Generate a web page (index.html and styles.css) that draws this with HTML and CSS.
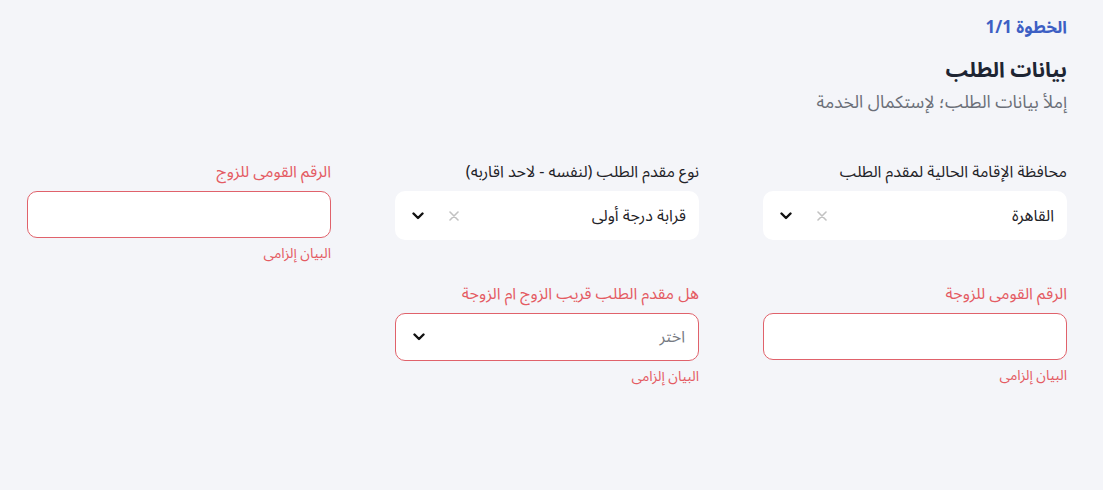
FILE: index.html
```html
<!DOCTYPE html>
<html lang="ar" dir="rtl">
<head>
<meta charset="utf-8">
<link rel="stylesheet" href="styles.css">
</head>
<body>
<main class="page">
  <header class="head">
    <div class="step">الخطوة 1/1</div>
    <h1 class="title">بيانات الطلب</h1>
    <p class="subtitle">إملأ بيانات الطلب؛ لإستكمال الخدمة</p>
  </header>
  <section class="form">
    <div class="field">
      <label class="label">محافظة الإقامة الحالية لمقدم الطلب</label>
      <div class="select">
        <span class="value">القاهرة</span>
        <svg class="clear" width="10" height="10" viewBox="0 0 10 10"><path d="M1 1 L9 9 M9 1 L1 9" fill="none" stroke="#c2c2c2" stroke-width="1.6" stroke-linecap="round"/></svg>
        <svg class="chev" width="12" height="8" viewBox="0 0 12 8"><path d="M1.5 1.5 L6 6 L10.5 1.5" fill="none" stroke="#111" stroke-width="2.4" stroke-linecap="round" stroke-linejoin="round"/></svg>
      </div>
    </div>
    <div class="field">
      <label class="label">نوع مقدم الطلب (لنفسه - لاحد اقاربه)</label>
      <div class="select">
        <span class="value">قرابة درجة أولى</span>
        <svg class="clear" width="10" height="10" viewBox="0 0 10 10"><path d="M1 1 L9 9 M9 1 L1 9" fill="none" stroke="#c2c2c2" stroke-width="1.6" stroke-linecap="round"/></svg>
        <svg class="chev" width="12" height="8" viewBox="0 0 12 8"><path d="M1.5 1.5 L6 6 L10.5 1.5" fill="none" stroke="#111" stroke-width="2.4" stroke-linecap="round" stroke-linejoin="round"/></svg>
      </div>
    </div>
    <div class="field error">
      <label class="label">الرقم القومى للزوج</label>
      <div class="input"></div>
      <div class="msg">البيان إلزامى</div>
    </div>
    <div class="field error">
      <label class="label">الرقم القومى للزوجة</label>
      <div class="input"></div>
      <div class="msg">البيان إلزامى</div>
    </div>
    <div class="field error">
      <label class="label">هل مقدم الطلب قريب الزوج ام الزوجة</label>
      <div class="select bordered">
        <span class="value placeholder">اختر</span>
        <svg class="chev" width="12" height="8" viewBox="0 0 12 8"><path d="M1.5 1.5 L6 6 L10.5 1.5" fill="none" stroke="#111" stroke-width="2.4" stroke-linecap="round" stroke-linejoin="round"/></svg>
      </div>
      <div class="msg">البيان إلزامى</div>
    </div>
  </section>
</main>
</body>
</html>
```

FILE: styles.css
```css
html, body {
  margin: 0;
  padding: 0;
  background: #f4f5f9;
}
body {
  font-family: "Noto Sans Arabic", "Noto Sans", "DejaVu Sans", sans-serif;
  color: #1f2937;
}
.page {
  padding: 16px 36px 0 27px;
}
.head {
  display: flex;
  flex-direction: column;
}
.step {
  font-size: 17px;
  line-height: 24px;
  font-weight: 700;
  color: #3d5fc4;
}
.title {
  margin: 17px 0 0;
  font-size: 21px;
  line-height: 26px;
  font-weight: 700;
  color: #1e2533;
}
.subtitle {
  margin: 8px 0 0;
  font-size: 17.5px;
  line-height: 24px;
  color: #6b6f78;
}
.form {
  margin-top: 47px;
  display: grid;
  grid-template-columns: repeat(3, 1fr);
  column-gap: 64px;
  row-gap: 21px;
  align-items: start;
}
.field {
  display: flex;
  flex-direction: column;
}
.label {
  font-size: 16px;
  line-height: 20px;
  color: #1f2328;
  margin-bottom: 9px;
}
.error .label {
  color: #e45b63;
}
.select, .input {
  box-sizing: border-box;
  height: 49px;
  background: #fff;
  border-radius: 10px;
  display: flex;
  align-items: center;
  padding: 0 13px 0 17px;
}
.input {
  height: 47px;
  border: 1px solid #e0626b;
}
.select.bordered {
  border: 1px solid #e0626b;
  height: 48px;
}
.value {
  font-size: 16px;
  color: #1f2328;
  flex: 1;
}
.placeholder {
  color: #767a82;
}
.clear {
  flex: none;
  margin-left: 25px;
}
.chev {
  flex: none;
}
.msg {
  margin-top: 7px;
  font-size: 14px;
  line-height: 18px;
  color: #e45b63;
}
```
